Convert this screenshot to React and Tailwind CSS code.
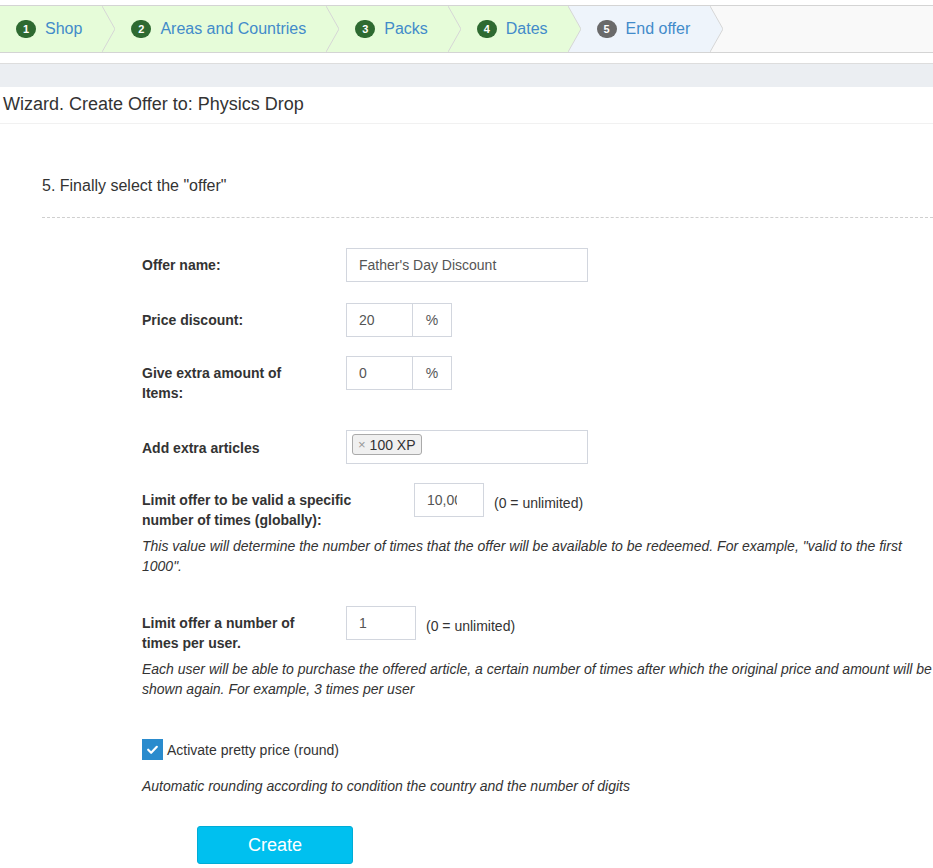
import React from 'react';

const steps = [
    { n: 1, label: 'Shop', done: true },
    { n: 2, label: 'Areas and Countries', done: true },
    { n: 3, label: 'Packs', done: true },
    { n: 4, label: 'Dates', done: true },
    { n: 5, label: 'End offer', done: false },
];

const GREEN = '#e6fcd9';
const BLUE = '#eef4fb';
const REST = '#f9f9f9';

function Chevron({ from, to }) {
    return (
        <svg width="13" height="46" viewBox="0 0 13 46" className="shrink-0 block">
            <rect x="0" y="0" width="13" height="46" fill={to} />
            <polygon points="0,0 13,23 0,46" fill={from} />
            <polyline points="0,0 13,23 0,46" fill="none" stroke="#d6d6d6" strokeWidth="1" />
        </svg>
    );
}

function Steps() {
    return (
        <div className="flex h-[48px] border-y border-[#d4d4d4] bg-[#f9f9f9]">
            {steps.map((s, i) => {
                const bg = s.done ? GREEN : BLUE;
                const next = i + 1 < steps.length ? (steps[i + 1].done ? GREEN : BLUE) : REST;
                return (
                    <React.Fragment key={s.n}>
                        <div
                            className={`flex items-center pl-4 pr-5 ${s.done ? 'bg-[#e6fcd9]' : 'bg-[#eef4fb]'}`}
                        >
                            <span
                                className={`w-5 h-[18px] rounded-full flex items-center justify-center text-white text-[11px] font-bold ${s.done ? 'bg-[#2e6a31]' : 'bg-[#6a6a6a]'}`}
                            >
                                {s.n}
                            </span>
                            <span className="ml-[9px] text-[16px] text-[#428bca]">{s.label}</span>
                        </div>
                        <Chevron from={bg} to={next} />
                    </React.Fragment>
                );
            })}
            <div className="flex-1 bg-[#f9f9f9]"></div>
        </div>
    );
}

function Label({ children, className = '' }) {
    return (
        <div className={`pt-[7px] text-[14px] leading-[20px] font-bold text-[#333] ${className}`}>
            {children}
        </div>
    );
}

const inputCls = 'h-[34px] border border-[#d2d6de] px-3 text-[14px] text-[#555] bg-white outline-none';

export default function App() {
    return (
        <div className="min-h-screen bg-white text-[#333] font-['Liberation_Sans',Arial,sans-serif] overflow-hidden">
            <div className="pt-[5px]">
                <Steps />
            </div>

            <div className="mt-[10px] border-t border-[#dddddd] h-[24px] bg-[#ebeef2]"></div>

            <div className="h-[37px] flex items-center pl-[3px] pb-[1px] border-b border-[#f1f1f1]">
                <h1 className="text-[18px] text-[#333]">Wizard. Create Offer to: Physics Drop</h1>
            </div>

            <div className="pl-[42px]">
                <div className="mt-[51px] text-[16px] leading-[22px]">5. Finally select the "offer"</div>
                <div className="mt-[20px] border-t border-dashed border-[#cfcfcf]"></div>

                <div className="pl-[100px] flex flex-col">
                    {/* Offer name */}
                    <div className="mt-[30px] flex">
                        <Label className="w-[204px]">Offer name:</Label>
                        <input className={`${inputCls} w-[242px]`} value="Father's Day Discount" readOnly />
                    </div>

                    {/* Price discount */}
                    <div className="mt-[21px] flex">
                        <Label className="w-[204px]">Price discount:</Label>
                        <div className="flex">
                            <input className={`${inputCls} w-[67px]`} value="20" readOnly />
                            <span className="h-[34px] w-[39px] border border-l-0 border-[#d2d6de] flex items-center justify-center text-[14px] text-[#555]">%</span>
                        </div>
                    </div>

                    {/* Extra amount */}
                    <div className="mt-[19px] flex">
                        <Label className="w-[204px] pr-[40px]">Give extra amount of Items:</Label>
                        <div className="flex self-start">
                            <input className={`${inputCls} w-[67px]`} value="0" readOnly />
                            <span className="h-[34px] w-[39px] border border-l-0 border-[#d2d6de] flex items-center justify-center text-[14px] text-[#555]">%</span>
                        </div>
                    </div>

                    {/* Extra articles */}
                    <div className="mt-[27px] flex">
                        <Label className="w-[204px] pt-[8px]">Add extra articles</Label>
                        <div className="h-[34px] w-[242px] border border-[#d2d6de] px-[5px] flex items-start pt-[3px]">
                            <span className="flex items-center h-[21px] px-[5px] border border-[#aaaaaa] rounded-[3px] bg-[#f0f0f0] text-[14px] text-[#333] leading-none">
                                <span className="text-[#999] mr-[4px] text-[13px]">×</span>100 XP
                            </span>
                        </div>
                    </div>

                    {/* Limit global */}
                    <div className="mt-[19px] flex">
                        <Label className="w-[272px] pr-[40px]">Limit offer to be valid a specific number of times (globally):</Label>
                        <input className={`${inputCls} w-[70px] pr-[26px] self-start`} value="10,000" readOnly />
                        <span className="ml-[10px] pt-[10px] text-[14px] leading-[20px]">(0 = unlimited)</span>
                    </div>
                    <p className="mt-[6px] text-[14px] italic leading-[20px] text-[#333]">
                        This value will determine the number of times that the offer will be available to be redeemed. For example, "valid to the first 1000".
                    </p>

                    {/* Limit per user */}
                    <div className="mt-[30px] flex">
                        <Label className="w-[204px] pr-[40px]">Limit offer a number of times per user.</Label>
                        <input className={`${inputCls} w-[70px] self-start`} value="1" readOnly />
                        <span className="ml-[10px] pt-[10px] text-[14px] leading-[20px]">(0 = unlimited)</span>
                    </div>
                    <p className="mt-[6px] text-[14px] italic leading-[20px] text-[#333]">
                        Each user will be able to purchase the offered article, a certain number of times after which the original price and amount will be shown again. For example, 3 times per user
                    </p>

                    {/* Pretty price */}
                    <div className="mt-[40px] flex items-center">
                        <span className="w-[21px] h-[21px] bg-[#2a8bcd] flex items-center justify-center">
                            <svg width="13" height="13" viewBox="0 0 24 24" fill="none" stroke="white" strokeWidth="4" strokeLinecap="round" strokeLinejoin="round">
                                <polyline points="4 12.5 9.5 18 20 7" />
                            </svg>
                        </span>
                        <span className="ml-[4px] text-[14px] leading-[20px]">Activate pretty price (round)</span>
                    </div>
                    <p className="mt-[16px] text-[14px] italic leading-[20px]">
                        Automatic rounding according to condition the country and the number of digits
                    </p>

                    <div className="mt-[30px] pl-[55px]">
                        <button className="w-[156px] h-[38px] bg-[#00c0ef] border border-[#00acd6] rounded-[3px] text-white text-[18px]">
                            Create
                        </button>
                    </div>
                </div>
            </div>
        </div>
    );
}
